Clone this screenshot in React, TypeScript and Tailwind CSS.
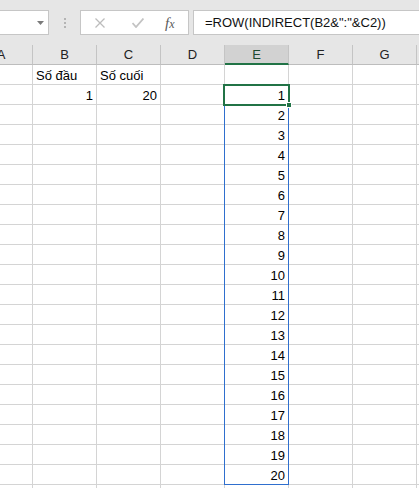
const COLS = ["A", "B", "C", "D", "E", "F", "G", ""];

type Cell = { text: string; align?: "left" | "right" };

// rows of the sheet, index 0 = row 1
const rows: Record<string, Cell>[] = [
  { B: { text: "Số đầu" }, C: { text: "Số cuối" } },
  { B: { text: "1", align: "right" }, C: { text: "20", align: "right" }, E: { text: "1", align: "right" } },
  ...Array.from({ length: 19 }, (_, i) => ({ E: { text: String(i + 2), align: "right" as const } })),
  {},
];

function colWidth(c: string) {
  return c === "A" ? "w-[33px]" : "w-[64px]";
}

function Toolbar() {
  return (
    <div className="flex h-[45px] items-start pt-[10px]">
      <div className="relative h-[25px] w-[49px] shrink-0 border border-l-0 border-[#c6c6c6] bg-white">
        <svg className="absolute left-[37px] top-[10px]" width="7" height="4" viewBox="0 0 7 4">
          <path d="M0 0h7L3.5 4z" fill="#7a7a7a" />
        </svg>
      </div>
      <div className="flex h-[25px] w-[31px] shrink-0 flex-col items-center justify-center gap-[2px]">
        <span className="h-[2px] w-[2px] bg-[#b4b4b4]" />
        <span className="h-[2px] w-[2px] bg-[#b4b4b4]" />
        <span className="h-[2px] w-[2px] bg-[#b4b4b4]" />
      </div>
      <div className="relative h-[25px] w-[109px] shrink-0 border border-[#c6c6c6] bg-white">
        <svg className="absolute left-[14px] top-[7px]" width="10" height="10" viewBox="0 0 10 10">
          <path d="M0.5 0.5l9 9M9.5 0.5l-9 9" stroke="#bcbcbc" strokeWidth="1.3" fill="none" />
        </svg>
        <svg className="absolute left-[51px] top-[7px]" width="12" height="10" viewBox="0 0 12 10">
          <path d="M0.5 5l3.5 4L11.5 0.5" stroke="#c3c3c3" strokeWidth="1.8" fill="none" />
        </svg>
        <span className="absolute left-[84px] top-[3px] font-['Liberation_Serif',serif] text-[15px] italic leading-[18px] text-[#5a5a5a]">
          f<span className="text-[12px]">x</span>
        </span>
      </div>
      <div className="ml-[4px] flex h-[25px] flex-1 items-center border border-r-0 border-[#c6c6c6] bg-white pl-[11px] text-[13px] text-[#111]">
        =ROW(INDIRECT(B2&amp;":"&amp;C2))
      </div>
    </div>
  );
}

function Header() {
  return (
    <div className="flex h-[20px]">
      {COLS.map((c, i) => {
        const active = c === "E";
        return (
          <div
            key={i}
            className={`${colWidth(c)} relative shrink-0 overflow-hidden border-r border-[#c4c4c4] ${
              active ? "border-b-2 border-b-[#217346] bg-[#d2d2d2] text-[#1d4a31]" : "border-b border-b-[#bdbdbd] text-[#222]"
            }`}
          >
            <div className={`${c === "A" ? "-ml-[31px] w-[64px]" : "w-full"} text-center text-[13px] leading-[19px]`}>{c}</div>
          </div>
        );
      })}
    </div>
  );
}

export default function App() {
  return (
    <div className="h-[488px] w-[419px] overflow-hidden bg-[#e6e6e6] font-['Liberation_Sans',Arial,sans-serif]">
      <Toolbar />
      <Header />
      <div className="relative bg-white">
        {rows.map((r, i) => (
          <div key={i} className="flex h-[20px]">
            {COLS.map((c, j) => {
              const cell = c ? r[c] : undefined;
              return (
                <div
                  key={j}
                  className={`${colWidth(c)} shrink-0 overflow-visible whitespace-nowrap border-b border-r border-[#d4d4d4] px-[3px] text-[13px] leading-[21px] text-black ${
                    cell?.align === "right" ? "text-right" : "text-left"
                  }`}
                >
                  {cell?.text}
                </div>
              );
            })}
          </div>
        ))}
        {/* selection E2:E21 */}
        <div className="absolute left-[224px] top-[19px] h-[401px] w-[65px] border border-[#2f6fce]" />
        {/* active cell */}
        <div className="absolute left-[223px] top-[19px] h-[22px] w-[67px] border-2 border-[#217346]" />
        <div className="absolute left-[286px] top-[37px] h-[6px] w-[6px] border border-white bg-[#217346]" />
      </div>
    </div>
  );
}
